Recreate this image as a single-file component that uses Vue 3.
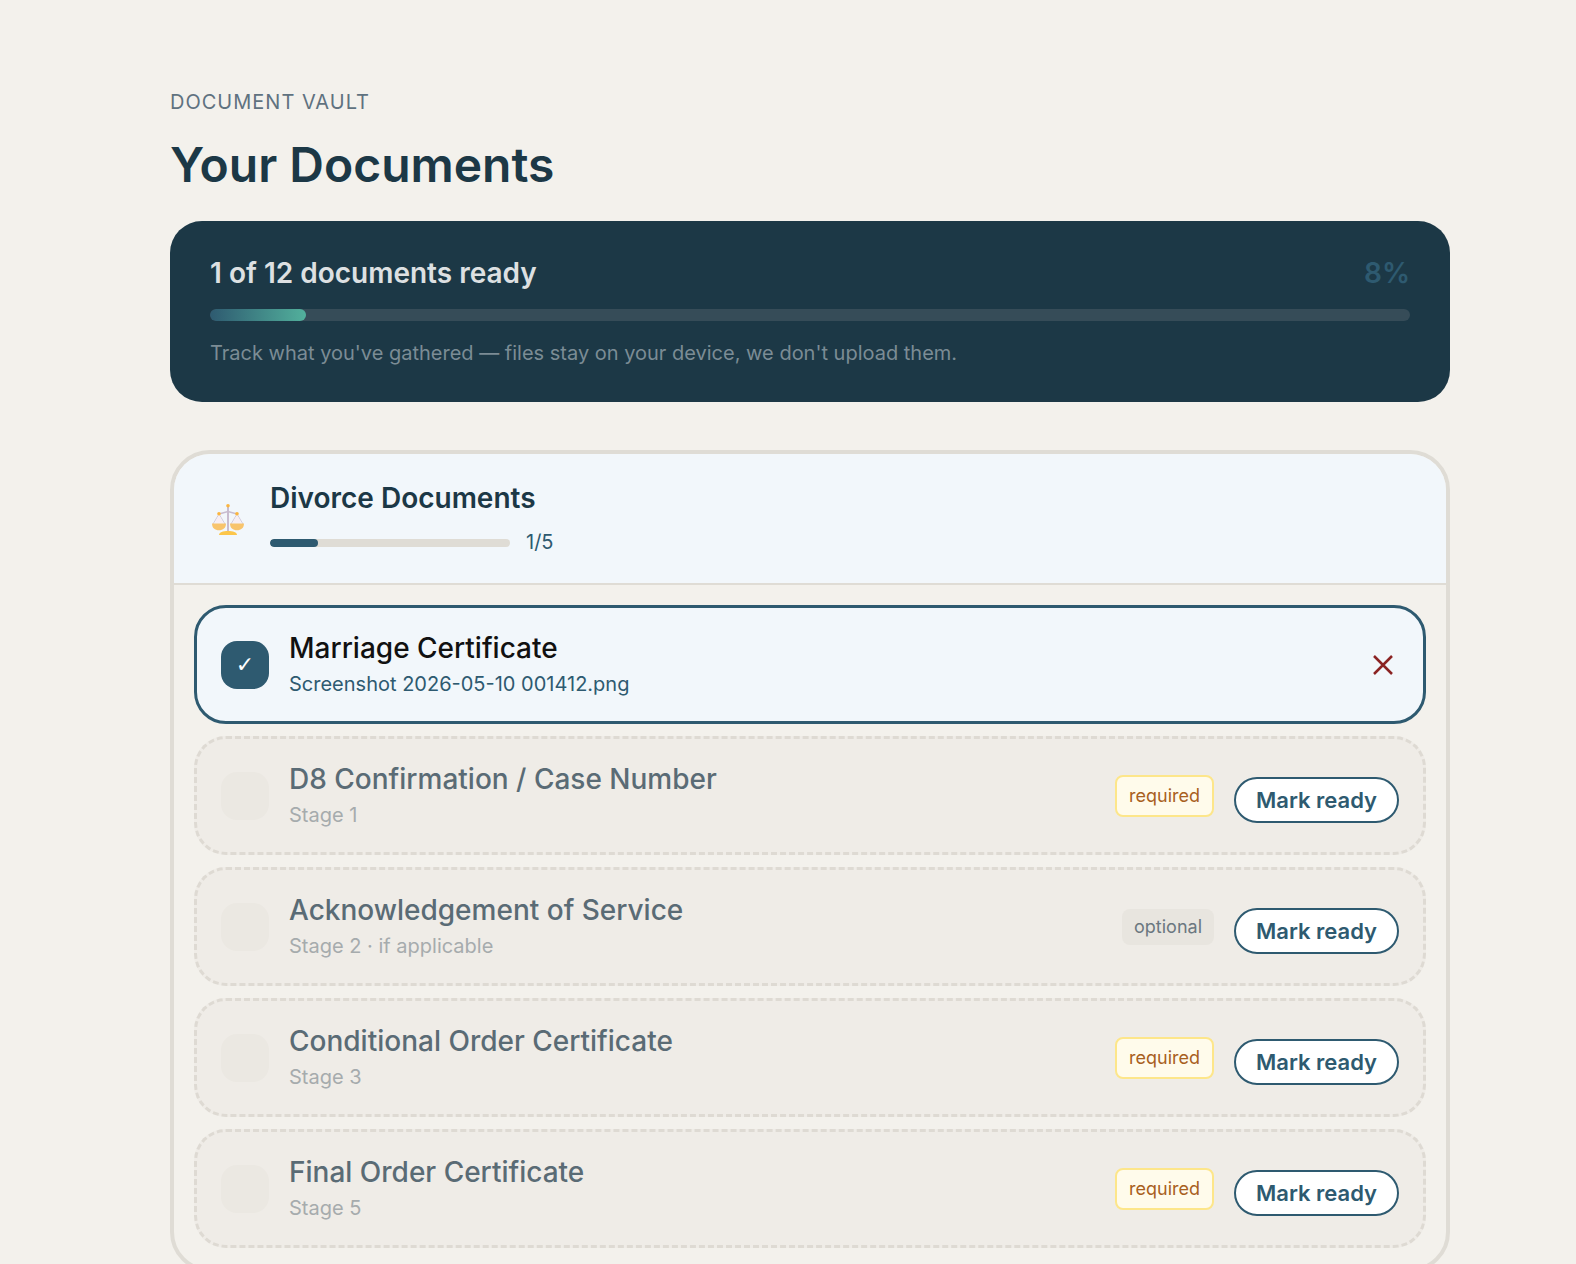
<script setup>
const docs = [
  { name: 'D8 Confirmation / Case Number', sub: 'Stage 1', tag: 'required' },
  { name: 'Acknowledgement of Service', sub: 'Stage 2 · if applicable', tag: 'optional' },
  { name: 'Conditional Order Certificate', sub: 'Stage 3', tag: 'required' },
  { name: 'Final Order Certificate', sub: 'Stage 5', tag: 'required' },
]
</script>

<template>
  <main class="page">
    <p class="eyebrow">DOCUMENT VAULT</p>
    <h1 class="title">Your Documents</h1>

    <section class="summary">
      <div class="summary-head">
        <span class="summary-text">1 of 12 documents ready</span>
        <span class="summary-pct">8%</span>
      </div>
      <div class="summary-track"><div class="summary-fill"></div></div>
      <p class="summary-note">Track what you've gathered — files stay on your device, we don't upload them.</p>
    </section>

    <section class="vault">
      <header class="vault-head">
        <svg class="scales" viewBox="0 0 32 32" aria-hidden="true">
          <path d="M16 3v26" stroke="#c8bccf" stroke-width="2" fill="none" />
          <path d="M7 11 16 8.500 25 11" stroke="#c8bccf" stroke-width="1.500" fill="none" />
          <path d="M7 11 1 21M7 11l6 10M25 11l-6 10M25 11l6 10" stroke="#cdbfd3" stroke-width="0.800" fill="none" />
          <path d="M7 12 2.500 20.500h9zM25 12l-4.500 8.500h9z" fill="#f7eef3" />
          <path d="M0 20.500h14c0 4.500-3 6.800-7 6.800s-7-2.300-7-6.800zM18 20.500h14c0 4.500-3 6.800-7 6.800s-7-2.300-7-6.800z" fill="#f8c46c" />
          <path d="M7 32c0-2.800 4-4 9-4s9 1.200 9 4z" fill="#fcc64a" />
          <circle cx="16" cy="2.800" r="1.800" fill="#fbb53f" />
          <circle cx="7" cy="10.700" r="1.800" fill="#fbb53f" />
          <circle cx="25" cy="10.700" r="1.800" fill="#fbb53f" />
        </svg>
        <div class="vault-info">
          <h2 class="vault-title">Divorce Documents</h2>
          <div class="vault-progress">
            <div class="vault-track"><div class="vault-fill"></div></div>
            <span class="vault-count">1/5</span>
          </div>
        </div>
      </header>

      <div class="items">
        <article class="item item-ready">
          <div class="box box-ready">✓</div>
          <div class="item-text">
            <div class="item-name">Marriage Certificate</div>
            <div class="item-file">Screenshot 2026-05-10 001412.png</div>
          </div>
          <svg class="remove" viewBox="0 0 20 20" aria-hidden="true">
            <path d="M1 1 19 19M19 1 1 19" stroke="#8b2323" stroke-width="2.500" fill="none" />
          </svg>
        </article>

        <article v-for="doc in docs" :key="doc.name" class="item item-empty">
          <div class="box"></div>
          <div class="item-text">
            <div class="item-name">{{ doc.name }}</div>
            <div class="item-sub">{{ doc.sub }}</div>
          </div>
          <span class="tag" :class="doc.tag">{{ doc.tag }}</span>
          <button class="mark" type="button">Mark ready</button>
        </article>
      </div>
    </section>
  </main>
</template>

<style>
html, body { margin: 0; background: #f3f1ec; }
</style>

<style scoped>
.page {
  box-sizing: border-box;
  width: 1576px;
  height: 1264px;
  overflow: hidden;
  padding: 88px 126px 0 170px;
  background: #f3f1ec;
  font-family: Inter, "Liberation Sans", sans-serif;
}
.eyebrow {
  margin: 0;
  font-size: 20px;
  line-height: 28px;
  letter-spacing: 1px;
  color: #5f7280;
}
.title {
  margin: 20px 0 0;
  font-size: 48px;
  line-height: 58px;
  font-weight: 600;
  color: #1c3846;
}
.summary {
  margin-top: 27px;
  padding: 32px 40px 0;
  height: 181px;
  box-sizing: border-box;
  border-radius: 32px;
  background: #1c3846;
}
.summary-head { display: flex; justify-content: space-between; align-items: center; height: 40px; }
.summary-text { font-size: 28px; font-weight: 600; color: #dde0e2; }
.summary-pct { font-size: 28px; font-weight: 600; color: #2e5a70; }
.summary-track { margin-top: 16px; height: 12px; border-radius: 6px; background: #364c58; overflow: hidden; }
.summary-fill { width: 8%; height: 100%; border-radius: 6px; background: linear-gradient(90deg, #2e5a70, #52b09c); }
.summary-note { margin: 18px 0 0; font-size: 20px; line-height: 28px; color: #7b8c95; }

.vault {
  margin-top: 48px;
  border: 4px solid #dfdcd5;
  border-radius: 40px;
  overflow: hidden;
}
.vault-head {
  display: flex;
  align-items: center;
  gap: 26px;
  height: 129px;
  padding: 0 38px;
  background: #f2f7fb;
  border-bottom: 2px solid #dfdcd5;
}
.scales { width: 32px; height: 32px; flex: none; }
.vault-info { display: flex; flex-direction: column; gap: 14px; padding-bottom: 3px; }
.vault-title { margin: 0; font-size: 28px; line-height: 38px; font-weight: 600; color: #1c3846; }
.vault-progress { display: flex; align-items: center; gap: 16px; }
.vault-track { width: 240px; height: 8px; border-radius: 4px; background: #dfdcd5; overflow: hidden; }
.vault-fill { width: 20%; height: 100%; border-radius: 4px; background: #2e5a70; }
.vault-count { font-size: 20px; line-height: 28px; margin-top: -3px; color: #2e5a70; }

.items { display: flex; flex-direction: column; gap: 12px; padding: 20px; }
.item {
  display: flex;
  align-items: center;
  gap: 20px;
  box-sizing: border-box;
  height: 119px;
  padding: 0 24px;
  border-radius: 32px;
}
.item-ready { border: 3px solid #2e5a70; background: #f2f7fb; }
.item-empty { border: 3px dashed #dedad3; background: #efece7; }
.box {
  width: 48px;
  height: 48px;
  flex: none;
  border-radius: 16px;
  background: #ebe8e2;
  display: flex;
  align-items: center;
  justify-content: center;
}
.box-ready { background: #2e5a70; color: #fff; font-family: "DejaVu Sans", sans-serif; font-size: 22px; }
.item-text { flex: 1; min-width: 0; }
.item-name { font-size: 28px; line-height: 38px; font-weight: 500; color: #111; position: relative; top: -2px; }
.item-empty .item-name { color: #5a6b75; }
.item-file, .item-sub { font-size: 20px; line-height: 28px; margin-top: 1px; }
.item-file { color: #2e5a70; }
.item-sub { color: #a6abad; }
.remove { width: 20px; height: 20px; flex: none; margin-right: 6px; }
.tag {
  box-sizing: border-box;
  font-size: 18px;
  line-height: 26px;
  border-radius: 8px;
}
.required { padding: 6px 12px; border: 2px solid #fde68a; background: #fffbeb; color: #a8601e; }
.optional { padding: 5px 12px; background: #e8e5df; color: #6b7780; }
.mark {
  box-sizing: border-box;
  height: 46px;
  width: 165px;
  margin-top: 8px;
  padding: 0;
  border: 2px solid #2e5a70;
  border-radius: 23px;
  background: #fff;
  font-family: inherit;
  font-size: 22px;
  font-weight: 600;
  color: #2e5a70;
}
</style>
